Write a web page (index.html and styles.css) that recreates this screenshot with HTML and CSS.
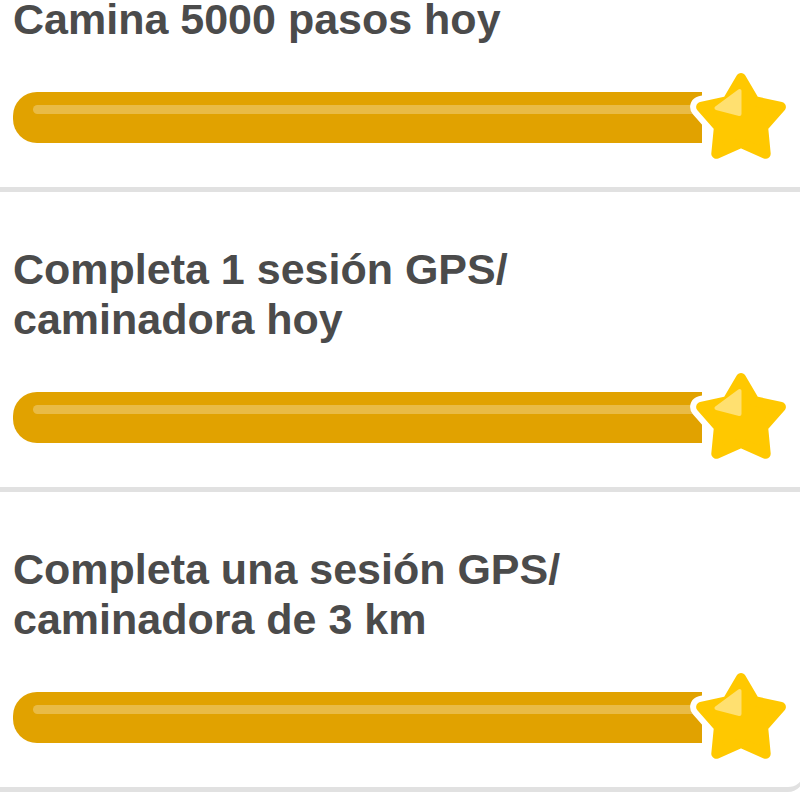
FILE: index.html
```html
<!DOCTYPE html>
<html lang="es">
<head>
  <meta charset="UTF-8">
  <meta name="viewport" content="width=device-width, initial-scale=1.0">
  <title>Misiones diarias</title>
  <link rel="stylesheet" href="styles.css">
</head>
<body>

<div class="card">
  <div class="quest">
    <h3 class="quest-title">Camina 5000 pasos hoy</h3>
    <div class="progress">
      <div class="bar"><span class="shine"></span></div>
      <svg class="star" viewBox="0 0 110 110" aria-hidden="true">
        <polygon class="star-edge" points="55,16 68.5,39.1 94.9,45 77.1,65.1 79.7,91.8 55,81 30.3,91.8 32.9,65.1 15.1,45 41.5,39.1"/>
        <polygon class="star-body" points="55,16 68.5,39.1 94.9,45 77.1,65.1 79.7,91.8 55,81 30.3,91.8 32.9,65.1 15.1,45 41.5,39.1"/>
        <polygon class="star-glint" points="53.5,29 53.5,52 30.5,46"/>
      </svg>
    </div>
  </div>

  <div class="quest">
    <h3 class="quest-title">Completa 1 sesión GPS/<br>caminadora hoy</h3>
    <div class="progress">
      <div class="bar"><span class="shine"></span></div>
      <svg class="star" viewBox="0 0 110 110" aria-hidden="true">
        <polygon class="star-edge" points="55,16 68.5,39.1 94.9,45 77.1,65.1 79.7,91.8 55,81 30.3,91.8 32.9,65.1 15.1,45 41.5,39.1"/>
        <polygon class="star-body" points="55,16 68.5,39.1 94.9,45 77.1,65.1 79.7,91.8 55,81 30.3,91.8 32.9,65.1 15.1,45 41.5,39.1"/>
        <polygon class="star-glint" points="53.5,29 53.5,52 30.5,46"/>
      </svg>
    </div>
  </div>

  <div class="quest">
    <h3 class="quest-title">Completa una sesión GPS/<br>caminadora de 3 km</h3>
    <div class="progress">
      <div class="bar"><span class="shine"></span></div>
      <svg class="star" viewBox="0 0 110 110" aria-hidden="true">
        <polygon class="star-edge" points="55,16 68.5,39.1 94.9,45 77.1,65.1 79.7,91.8 55,81 30.3,91.8 32.9,65.1 15.1,45 41.5,39.1"/>
        <polygon class="star-body" points="55,16 68.5,39.1 94.9,45 77.1,65.1 79.7,91.8 55,81 30.3,91.8 32.9,65.1 15.1,45 41.5,39.1"/>
        <polygon class="star-glint" points="53.5,29 53.5,52 30.5,46"/>
      </svg>
    </div>
  </div>
</div>

</body>
</html>
```

FILE: styles.css
```css
body {
  font-family: "Liberation Sans", Arial, sans-serif;
  margin: 0;
  padding: 0;
  background-color: #fff;
  overflow: hidden;
}
.card {
  width: 824px;
  margin: -60px 0 0 -20px;
  box-sizing: border-box;
  border: 2px solid #e1e1e1;
  border-bottom-width: 5px;
  border-radius: 16px;
}
.quest {
  padding: 52px 6px 27px 31px;
}
.quest + .quest {
  border-top: 5px solid #e1e1e1;
}
.quest-title {
  margin: 0 0 30px;
  font-size: 43px;
  line-height: 50px;
  font-weight: bold;
  color: #4b4b4b;
}
.progress {
  display: flex;
  align-items: center;
}
.bar {
  flex: 1;
  height: 51px;
  margin-right: -16px;
  background-color: #e1a200;
  border-radius: 24px 0 0 24px;
  position: relative;
}
.shine {
  position: absolute;
  left: 20px;
  right: 0;
  top: 13px;
  height: 9px;
  border-radius: 5px 0 0 5px;
  background-color: rgba(255, 255, 255, 0.27);
}
.star {
  flex: none;
  width: 110px;
  height: 110px;
  margin: -12px 0;
  position: relative;
}
.star-edge {
  fill: #fff;
  stroke: #fff;
  stroke-width: 22;
  stroke-linejoin: round;
}
.star-body {
  fill: #ffc800;
  stroke: #ffc800;
  stroke-width: 10;
  stroke-linejoin: round;
}
.star-glint {
  fill: #ffe070;
  stroke: #ffe070;
  stroke-width: 4;
  stroke-linejoin: round;
}
```
